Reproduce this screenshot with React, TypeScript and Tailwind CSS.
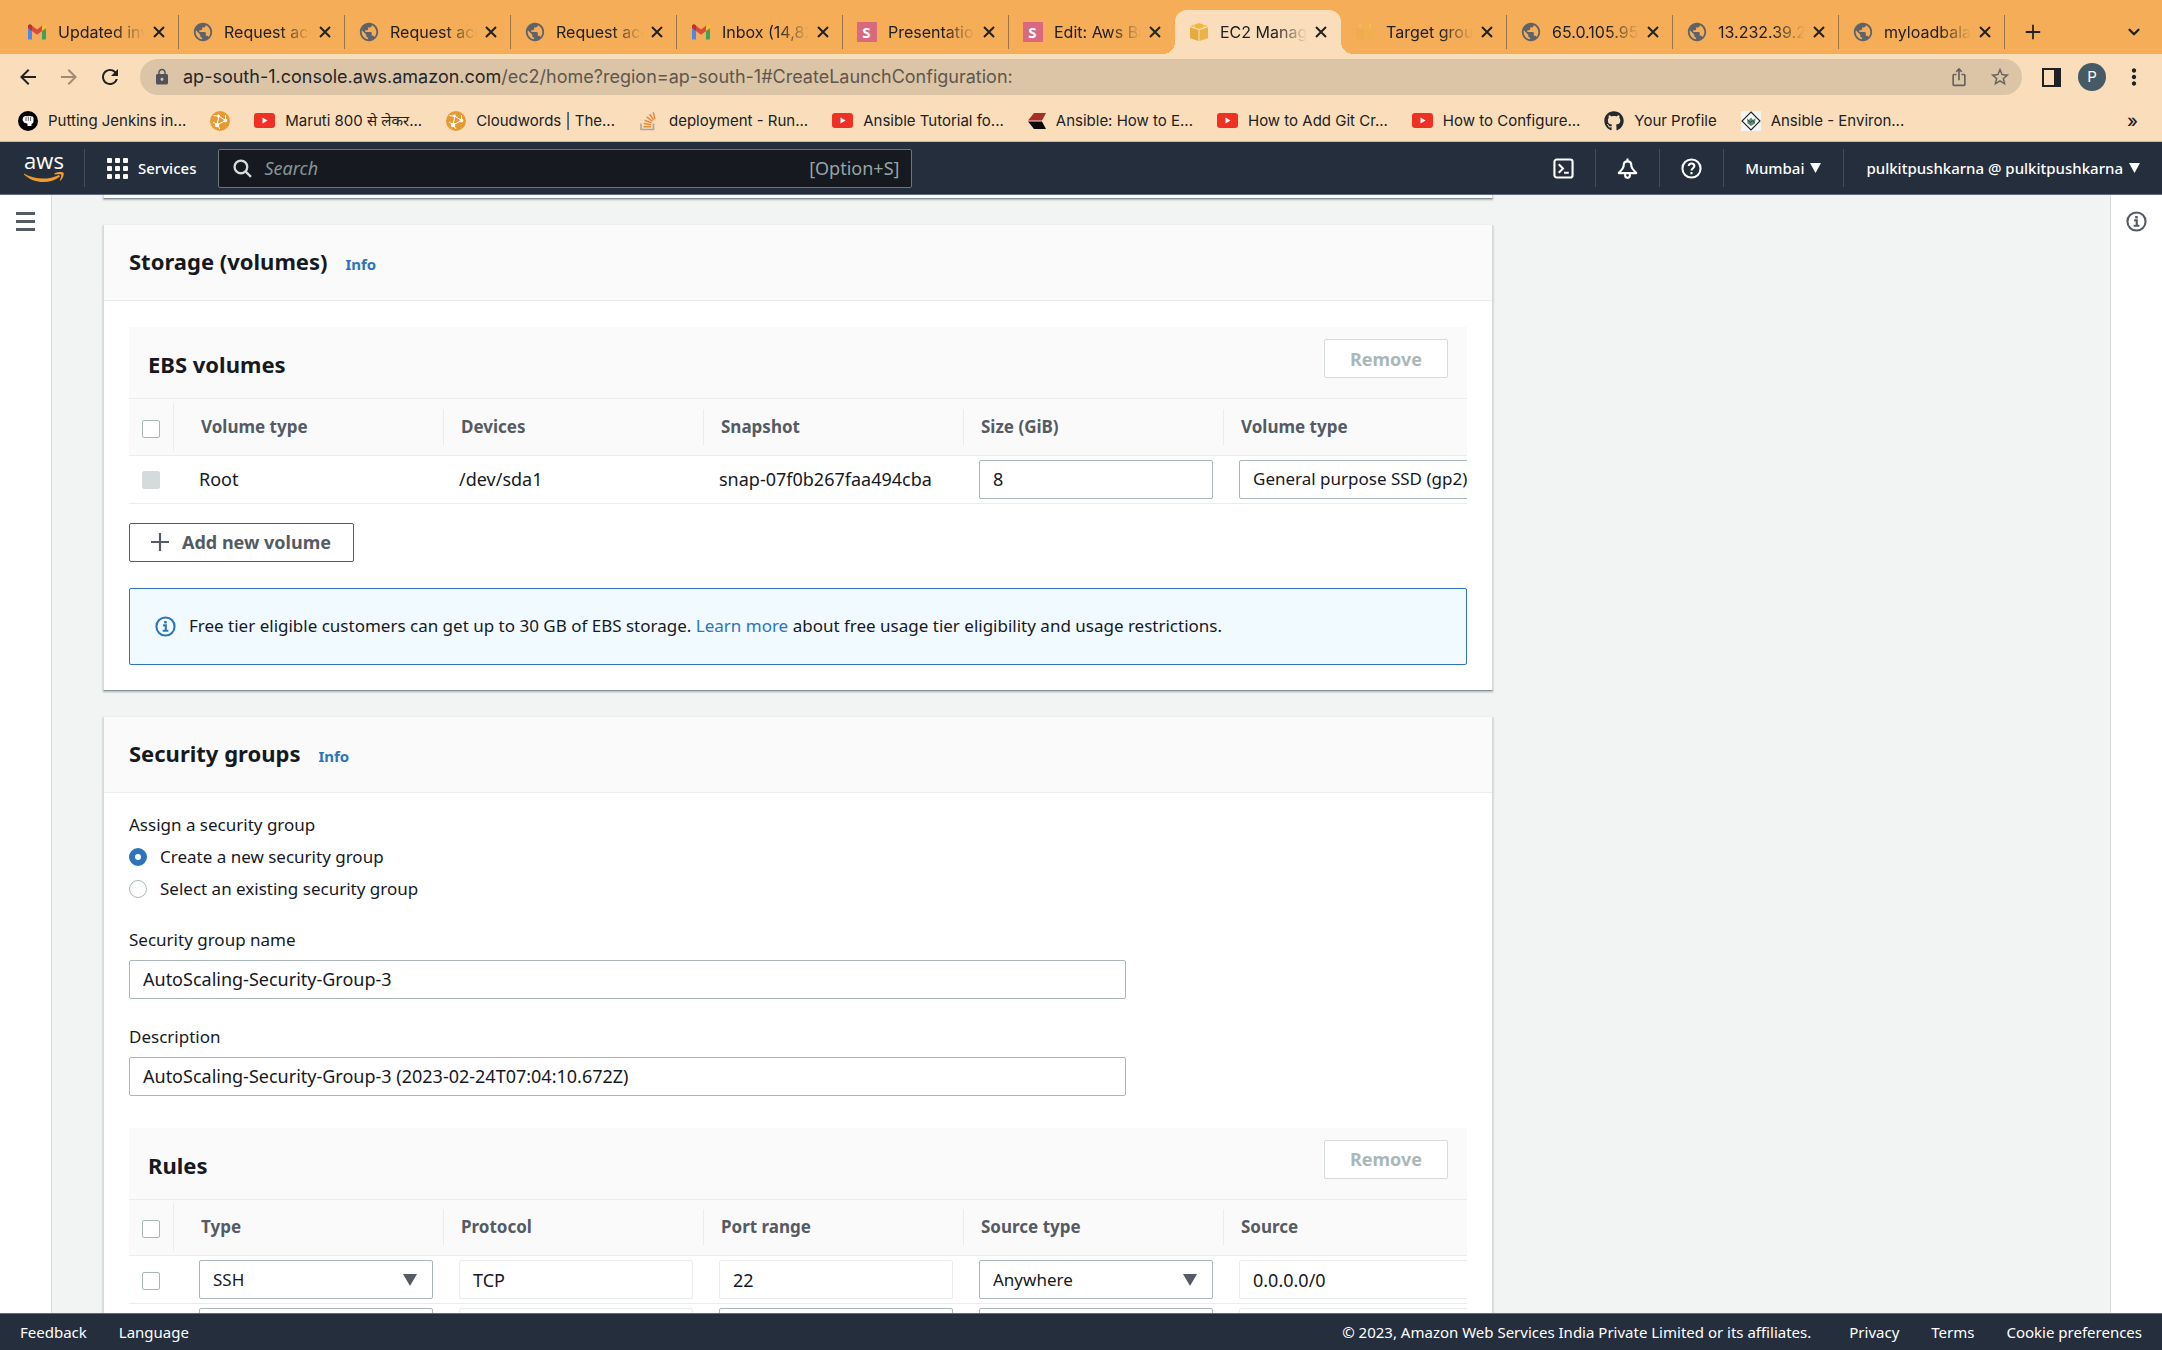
import React from "react";
import type { ReactNode } from "react";
import {
  MdArrowBack,
  MdArrowForward,
  MdRefresh,
  MdLock,
  MdStarBorder,
  MdMoreVert,
  MdPublic,
  MdIosShare,
} from "react-icons/md";
import { FaGithub } from "react-icons/fa";
import { FiChevronDown } from "react-icons/fi";

/* ---------- site icons ---------- */

const Gmail = () => (
  <svg viewBox="0 0 20 16" className="h-4 w-5 shrink-0" aria-hidden="true">
    <path d="M1 2.2v12.3c0 .6.4 1 1 1h3V7L1 4z" fill="#4b87f0" />
    <path d="M19 2.2v12.3c0 .6-.4 1-1 1h-3V7l4-3z" fill="#35a55a" />
    <path d="M1 2.4C1 .7 2.9.1 4.2 1L10 5.4 15.8 1v5.4L10 10.8 1 4z" fill="#dc4a3e" />
    <path d="M1 2.4C1 .7 2.9.1 4.2 1l.8.6V7L1 4z" fill="#b8352c" />
    <path d="M19 2.4C19 .7 17.1.1 15.8 1l-.8.6V7l4-3z" fill="#f0bf35" />
  </svg>
);

const Globe = () => <MdPublic className="size-[22px] shrink-0 text-[#5f6368]" aria-hidden="true" />;

const SBadge = () => (
  <span className="flex size-5 shrink-0 items-center justify-center bg-[#d9697f] font-['Noto_Sans',sans-serif] text-[15px] font-bold text-white">
    S
  </span>
);

const Cube = ({ faded = false }: { faded?: boolean }) => (
  <svg viewBox="0 0 20 20" className={faded ? "size-5 shrink-0 opacity-40" : "size-5 shrink-0"} aria-hidden="true">
    <path d="M1 4 10 1l9 3-9 3z" fill="#f3b73c" />
    <path d="M1 5.2 9.5 8v11L1 16.2z" fill="#e3ab40" />
    <path d="M19 5.2 10.5 8v11l8.500-2.800z" fill="#e9b347" />
    <path d="M5 1.8v4.6M15 1.8v4.6" stroke="#fadebb" strokeWidth=".8" />
  </svg>
);

const YouTube = () => (
  <svg viewBox="0 0 21 15" className="h-[15px] w-[21px] shrink-0" aria-hidden="true">
    <rect width="21" height="15" rx="3" fill="#ee3124" />
    <path d="M8.500 4.500v6l5-3z" fill="#fff" />
  </svg>
);

const Fist = () => (
  <svg viewBox="0 0 20 20" className="size-5 shrink-0" aria-hidden="true">
    <circle cx="10" cy="10" r="10" fill="#000" />
    <path
      d="M5 6.5 7 5l2 .3 2-.6 1.8.5 2 .3.8 1.500-.2 4.500-1.900 1.500V15H9.500v-2.200L6 11.500 4.600 9z"
      fill="#fff"
    />
    <path d="M8 6v4M10.300 5.500v4.500M12.600 6v4" stroke="#000" strokeWidth=".6" />
  </svg>
);

const Cloudwords = () => (
  <svg viewBox="0 0 20 20" className="size-5 shrink-0" aria-hidden="true">
    <circle cx="10" cy="10" r="10" fill="#e59a36" />
    <path
      d="M3.500 4.500 9 5.500M9 5l-2 9M8 4.500l7.500 5L7 14M15.500 9.500V4M7 14l3 4M7 14l-4-3"
      stroke="#fff"
      strokeWidth="1"
      fill="none"
    />
    <circle cx="8.500" cy="5" r="1.400" fill="#fff" />
    <circle cx="7" cy="14" r="2.200" fill="#fff" />
    <circle cx="15.500" cy="9.600" r="1.800" fill="#fff" />
  </svg>
);

const StackOverflow = () => (
  <svg viewBox="0 0 20 20" className="size-5 shrink-0" aria-hidden="true">
    <path d="M2 12.500v6h12.500v-6" fill="none" stroke="#a7a6a3" strokeWidth="1.600" />
    <path
      d="M4.500 15.700h7.500M4.700 12.600l7.400 1.200M5.600 9.300l7 2.600M7.600 5.900l6 4.400M10.600 3.200l4.300 5.900M14.200 1.200l1.800 6.900"
      stroke="#ea8a3e"
      strokeWidth="1.500"
    />
  </svg>
);

const Chevrons = () => (
  <svg viewBox="0 0 18 16" className="h-4 w-[18px] shrink-0" aria-hidden="true">
    <path d="M6 0h12l-4 7.500H0z" fill="#a52f2d" />
    <path d="M0 8.500h14l4 7.500H6z" fill="#0a0a0a" />
  </svg>
);

const Diamond = () => (
  <svg viewBox="0 0 20 20" className="size-5 shrink-0" aria-hidden="true">
    <rect width="20" height="20" fill="#f4f4f4" />
    <path d="M10 1l9 9-9 9-9-9z" fill="#fdfdfd" stroke="#222" strokeWidth="1.100" />
    <path d="M6 7.500 8 9l2-2.500L12 9l2.500-2-.5 5.500-4 2.500-3.500-2.500z" fill="#5d8d76" />
    <path d="M7 9l2 2.500L12 9.500l1.500 2.500" stroke="#2c4438" strokeWidth=".9" fill="none" />
  </svg>
);

const Cross = () => (
  <svg viewBox="0 0 12 12" className="size-3" stroke="currentColor" strokeWidth="2" aria-hidden="true">
    <path d="m1 1 10 10M11 1 1 11" />
  </svg>
);

const Plus = ({ className }: { className: string }) => (
  <svg viewBox="0 0 20 20" className={className} stroke="currentColor" strokeWidth="2.200" aria-hidden="true">
    <path d="M10 1v18M1 10h18" />
  </svg>
);

const Caret = ({ className }: { className: string }) => (
  <svg viewBox="0 0 10 9" className={className} preserveAspectRatio="none" aria-hidden="true">
    <path d="M0 0h10L5 9z" fill="currentColor" />
  </svg>
);

const InfoIcon = ({ className }: { className: string }) => (
  <svg viewBox="0 0 22 22" className={className} fill="none" stroke="currentColor" aria-hidden="true">
    <circle cx="11" cy="11" r="9.500" strokeWidth="2.200" />
    <path d="M8.500 9.800H11.300v5.400M8 15.400h6" strokeWidth="2.200" />
    <path d="M9.600 6.500h2.700" strokeWidth="2.600" />
  </svg>
);

const AwsLogo = () => (
  <span className="flex w-10 flex-col items-center text-white">
    <span className="font-['Open_Sans','Noto_Sans',sans-serif] text-[22px] leading-[16px] font-medium">aws</span>
    <svg viewBox="0 0 40 12" className="mt-1 h-3 w-10" aria-hidden="true">
      <path d="M0 1.500C10 7.500 24 8.500 35 3l1 1.500C26 12.500 10 12 0 2.500z" fill="#f39a2d" />
      <path
        d="M30.500 1.500c3-1.700 8-1.900 9-.7.800 1.300-.4 5.600-3 7.800-.6.400-.9.200-.6-.5.700-1.800 1.700-4.600 1.200-5.300-.6-.8-4-.6-6-.3-.9.100-1.200-.5-.6-1z"
        fill="#f39a2d"
      />
    </svg>
  </span>
);

/* ---------- browser ---------- */

type Tab = { icon: ReactNode; title: string; state?: "active" | "beforeActive" };

const tabs: Tab[] = [
  { icon: <Gmail />, title: "Updated invitation" },
  { icon: <Globe />, title: "Request access" },
  { icon: <Globe />, title: "Request access" },
  { icon: <Globe />, title: "Request access" },
  { icon: <Gmail />, title: "Inbox (14,826)" },
  { icon: <SBadge />, title: "Presentations" },
  { icon: <SBadge />, title: "Edit: Aws Basics", state: "beforeActive" },
  { icon: <Cube />, title: "EC2 Management", state: "active" },
  { icon: <Cube faded />, title: "Target groups" },
  { icon: <Globe />, title: "65.0.105.95" },
  { icon: <Globe />, title: "13.232.39.24" },
  { icon: <Globe />, title: "myloadbalancer" },
];

function TabStrip() {
  return (
    <div className="flex h-[54px] items-end bg-[#f5ae57] pr-4 pl-[13px]">
      {tabs.map((tab, i) => {
        const active = tab.state === "active";
        return (
          <div
            key={i}
            className={
              active
                ? "relative flex h-11 w-[166px] items-center rounded-t-xl bg-[#fadebb]"
                : "flex h-11 w-[166px] items-center"
            }
          >
            {active && (
              <>
                <span className="absolute bottom-0 -left-3 size-3 bg-[radial-gradient(circle_at_0_0,transparent_12px,#fadebb_12px)]" />
                <span className="absolute -right-3 bottom-0 size-3 bg-[radial-gradient(circle_at_100%_0,transparent_12px,#fadebb_12px)]" />
              </>
            )}
            <span className="flex w-[45px] shrink-0 items-center justify-center pl-0.5">{tab.icon}</span>
            <span className="w-[87px] overflow-hidden text-[16px] whitespace-nowrap [mask-image:linear-gradient(to_right,black_64%,transparent)]">
              {tab.title}
            </span>
            <button aria-label={"Close " + tab.title} className="ml-1 flex size-5 items-center justify-center">
              <Cross />
            </button>
            {!tab.state && <span className="ml-auto h-[34px] w-px bg-[#9a7443]" />}
          </div>
        );
      })}
      <button aria-label="New tab" className="ml-3 flex h-11 w-8 items-center justify-center">
        <Plus className="size-4" />
      </button>
      <button aria-label="Search tabs" className="ml-auto flex h-11 w-6 items-center justify-center">
        <FiChevronDown className="size-[18px]" strokeWidth={3} />
      </button>
    </div>
  );
}

function Toolbar() {
  return (
    <div className="flex h-[46px] items-center pr-3.5 pl-4">
      <button aria-label="Back" className="flex w-6 justify-center">
        <MdArrowBack className="size-6" />
      </button>
      <button aria-label="Forward" className="ml-[17px] flex w-6 justify-center text-[#a08c74]">
        <MdArrowForward className="size-6" />
      </button>
      <button aria-label="Reload" className="ml-[17px] flex w-6 justify-center">
        <MdRefresh className="size-[26px]" />
      </button>
      <div className="ml-[18px] flex h-9 min-w-0 flex-1 items-center rounded-full bg-[#dcc4a6] pr-[11px] pl-[13px]">
        <MdLock className="mr-3 size-[18px] shrink-0 text-[#50545a]" />
        <p className="flex-1 text-[18px] whitespace-nowrap text-[#5e574d]">
          <span className="text-[#25262a]">ap-south-1.console.aws.amazon.com</span>
          /ec2/home?region=ap-south-1#CreateLaunchConfiguration:
        </p>
        <button aria-label="Share" className="mr-5 text-[#66625c]">
          <MdIosShare className="size-5" />
        </button>
        <button aria-label="Bookmark this page" className="text-[#66625c]">
          <MdStarBorder className="size-[22px]" />
        </button>
      </div>
      <button aria-label="Side panel" className="ml-5 flex size-[19px] border-2 border-[#202124]">
        <span className="ml-auto h-full border-l-[5px] border-[#202124]" />
      </button>
      <button
        aria-label="Profile"
        className="ml-[17px] flex size-7 items-center justify-center rounded-full bg-[#455a64] text-[15px] text-white"
      >
        P
      </button>
      <button aria-label="Menu" className="ml-3.5 flex w-7 justify-center">
        <MdMoreVert className="size-[26px]" />
      </button>
    </div>
  );
}

const bookmarks: { icon: ReactNode; label: string }[] = [
  { icon: <Fist />, label: "Putting Jenkins in..." },
  { icon: <Cloudwords />, label: "" },
  { icon: <YouTube />, label: "Maruti 800 से लेकर..." },
  { icon: <Cloudwords />, label: "Cloudwords | The..." },
  { icon: <StackOverflow />, label: "deployment - Run..." },
  { icon: <YouTube />, label: "Ansible Tutorial fo..." },
  { icon: <Chevrons />, label: "Ansible: How to E..." },
  { icon: <YouTube />, label: "How to Add Git Cr..." },
  { icon: <YouTube />, label: "How to Configure..." },
  { icon: <FaGithub className="size-5 shrink-0 text-[#24292e]" />, label: "Your Profile" },
  { icon: <Diamond />, label: "Ansible - Environ..." },
];

function Bookmarks() {
  return (
    <nav
      aria-label="Bookmarks"
      className="flex h-[42px] items-center gap-6 border-b border-[#cdb697] pr-6 pl-[18px]"
    >
      {bookmarks.map((b, i) => (
        <a
          key={i}
          href="#"
          aria-label={b.label || "Cloudwords"}
          className="flex items-center gap-2.5 text-[15px] leading-6 whitespace-nowrap"
        >
          {b.icon}
          {b.label && <span>{b.label}</span>}
        </a>
      ))}
      <button aria-label="More bookmarks" className="ml-auto text-[18px] font-medium">
        »
      </button>
    </nav>
  );
}

/* ---------- console ---------- */

const NavDivider = ({ className }: { className: string }) => (
  <span className={"h-[38px] w-px bg-[#414d5c] " + className} />
);

function ConsoleNav() {
  return (
    <header className="flex h-[53px] shrink-0 items-center border-b border-[#5f6b7a] bg-[#252e3d] pr-[22px] pl-6 text-[15px] font-medium text-white">
      <a href="#" aria-label="AWS home">
        <AwsLogo />
      </a>
      <NavDivider className="ml-5" />
      <button className="ml-[22px] flex items-center gap-2.5">
        <span className="grid grid-cols-3 gap-[3px]">
          {Array.from({ length: 9 }, (_, i) => (
            <span key={i} className="size-[5px] rounded-[1px] bg-white" />
          ))}
        </span>
        <span>Services</span>
      </button>
      <label className="ml-[22px] flex h-[39px] w-[694px] items-center rounded-[2px] border border-[#687878] bg-[#16191f] pr-3 pl-[14px]">
        <svg
          viewBox="0 0 18 18"
          className="mr-3 size-[19px] shrink-0"
          fill="none"
          stroke="#d5dbdb"
          strokeWidth="2.200"
          aria-hidden="true"
        >
          <circle cx="7.500" cy="7.500" r="6" />
          <path d="m12 12 5 5" />
        </svg>
        <input
          type="text"
          aria-label="Search"
          placeholder="Search"
          className="min-w-0 flex-1 bg-transparent text-[18px] font-normal placeholder:text-[#879596] placeholder:italic focus:outline-none"
        />
        <span className="text-[18px] font-normal text-[#95a5a6]">[Option+S]</span>
      </label>
      <div className="ml-auto flex items-center">
        <button aria-label="CloudShell">
          <svg viewBox="0 0 22 22" className="size-[21px]" fill="none" stroke="#fff" strokeWidth="2.200" aria-hidden="true">
            <rect x="1.500" y="1.500" width="19" height="19" rx="2.500" />
            <path d="m6 6.500 4.500 4.500L6 15.500M11.500 15.500h5" />
          </svg>
        </button>
        <NavDivider className="mx-[21px]" />
        <button aria-label="Notifications">
          <svg
            viewBox="0 0 22 22"
            className="size-[21px]"
            fill="none"
            stroke="#fff"
            strokeWidth="2.200"
            strokeLinejoin="round"
            aria-hidden="true"
          >
            <path d="M11 .5v3M11 3.500c-2.600 0-4 1.700-4 4.200C7 11 4.500 13 1.800 15.800h18.400C17.500 13 15 11 15 7.700c0-2.500-1.400-4.200-4-4.200z" />
            <path d="M8.500 16v2.200c0 1.500 1 2.600 2.500 2.600s2.500-1.100 2.500-2.600V16" />
          </svg>
        </button>
        <NavDivider className="mx-[21px]" />
        <button aria-label="Help">
          <svg viewBox="0 0 22 22" className="size-[21px]" fill="none" stroke="#fff" strokeWidth="2.200" aria-hidden="true">
            <circle cx="11" cy="11" r="9.500" />
            <path d="M8 8.500C8 6.800 9.300 5.800 11 5.800s3 1.100 3 2.700c0 2.200-3 2.300-3 4.700M11 14.700v2.200" />
          </svg>
        </button>
        <NavDivider className="mx-[21px]" />
        <button className="flex items-center gap-1.5">
          Mumbai <Caret className="h-[10px] w-[11px]" />
        </button>
        <NavDivider className="mx-[22px]" />
        <button className="flex items-center gap-1.5">
          pulkitpushkarna @ pulkitpushkarna <Caret className="h-[10px] w-[11px]" />
        </button>
      </div>
    </header>
  );
}

const fieldBox = "h-[39px] w-full rounded-[2px] border bg-white px-[13px] text-[#16191f] focus:outline-none";
const checkBox =
  "block size-[18px] appearance-none rounded-[2px] border border-[#aab7b8] bg-white disabled:border-[#d5dbdb] disabled:bg-[#d5dbdb]";

const TextField = ({ label, value }: { label: string; value: string }) => (
  <input type="text" aria-label={label} defaultValue={value} className={fieldBox + " border-[#aab7b8] text-[18px]"} />
);

const ReadOnlyField = ({ label, value }: { label: string; value: string }) => (
  <input
    type="text"
    readOnly
    aria-label={label}
    defaultValue={value}
    className={fieldBox + " border-[#eaeded] text-[18px]"}
  />
);

const SelectField = ({ label, value }: { label: string; value: string }) => (
  <span className="relative block">
    <select aria-label={label} className={fieldBox + " appearance-none border-[#aab7b8] text-[17px]"}>
      <option>{value}</option>
    </select>
    <Caret className="pointer-events-none absolute top-[14px] right-4 h-3 w-[14px] text-[#545b64]" />
  </span>
);

function Card({ title, children }: { title: string; children: ReactNode }) {
  return (
    <section className="border-x border-b border-x-[#d5dbdb] border-b-[#879596] bg-white shadow-[0_1px_2px_0_rgba(0,28,36,0.3)]">
      <header className="flex h-[76px] items-baseline gap-[18px] border-b border-[#eaeded] bg-[#fafafa] px-[25px] pt-[21px]">
        <h2 className="text-[22px] leading-[30px] font-bold text-[#16191f]">{title}</h2>
        <a href="#" className="text-[15px] font-bold text-[#2e74bb]">
          Info
        </a>
      </header>
      <div className="px-[25px]">{children}</div>
    </section>
  );
}

type Row = { label: string; disabled?: boolean; cells: ReactNode[] };

function DataTable({ title, columns, rows }: { title: string; columns: string[]; rows: Row[] }) {
  return (
    <div className="overflow-hidden">
      <div className="flex h-[72px] items-start justify-between border-b border-[#eaeded] bg-[#fafafa] px-[19px] pt-3">
        <h3 className="pt-2.5 text-[22px] leading-[30px] font-bold text-[#16191f]">{title}</h3>
        <button
          disabled
          className="h-[39px] w-[124px] rounded-[2px] border border-[#d5dbdb] bg-white text-[18px] font-bold text-[#aab7b8]"
        >
          Remove
        </button>
      </div>
      <table className="w-[1415px] table-fixed border-collapse text-left">
        <colgroup>
          <col className="w-[55px]" />
          {columns.map((c, i) => (
            <col key={c + i} className={i === columns.length - 1 ? "w-[320px]" : "w-[260px]"} />
          ))}
        </colgroup>
        <thead>
          <tr className="h-14 border-b border-[#eaeded] bg-[#fafafa]">
            <th className="p-0">
              <span className="mr-2.5 flex h-12 items-center border-r border-[#eaeded] pt-1 pl-[13px]">
                <input type="checkbox" aria-label="Select all" className={checkBox} />
              </span>
            </th>
            {columns.map((c, i) => (
              <th key={c + i} scope="col" className="p-0 font-bold text-[#545b64]">
                <span
                  className={
                    i === columns.length - 1
                      ? "flex h-9 items-center pl-[17px]"
                      : "flex h-9 items-center border-r border-[#eaeded] pl-[17px]"
                  }
                >
                  {c}
                </span>
              </th>
            ))}
          </tr>
        </thead>
        <tbody>
          {rows.map((r, i) => (
            <tr key={i} className="h-12 border-b border-[#eaeded] text-[18px] text-[#16191f]">
              <td className="p-0 pt-0.5 pl-[13px]">
                <input type="checkbox" aria-label={r.label} disabled={r.disabled} className={checkBox} />
              </td>
              {r.cells.map((cell, j) => (
                <td key={j} className="p-0 pr-[11px] pl-[15px]">
                  {cell}
                </td>
              ))}
            </tr>
          ))}
        </tbody>
      </table>
    </div>
  );
}

const ebsRows: Row[] = [
  {
    label: "Select Root",
    disabled: true,
    cells: [
      "Root",
      "/dev/sda1",
      "snap-07f0b267faa494cba",
      <TextField label="Size (GiB)" value="8" />,
      <SelectField label="Volume type" value="General purpose SSD (gp2)" />,
    ],
  },
];

const ruleRow = (
  name: string,
  type: string,
  protocol: string,
  port: ReactNode,
  sourceType: string,
  source: string,
): Row => ({
  label: "Select rule " + name,
  cells: [
    <SelectField label="Type" value={type} />,
    <ReadOnlyField label="Protocol" value={protocol} />,
    port,
    <SelectField label="Source type" value={sourceType} />,
    <ReadOnlyField label="Source" value={source} />,
  ],
});

const rules: Row[] = [
  ruleRow("1", "SSH", "TCP", <ReadOnlyField label="Port range" value="22" />, "Anywhere", "0.0.0.0/0"),
  ruleRow("2", "Custom TCP", "TCP", <TextField label="Port range" value="" />, "Anywhere", "0.0.0.0/0"),
];

const radio =
  "size-[18px] appearance-none rounded-full border border-[#aab7b8] bg-white checked:border-[6px] checked:border-[#2e74bb]";

function Labeled({ id, label, value, className }: { id: string; label: string; value: string; className: string }) {
  return (
    <div className={"max-w-[997px] " + className}>
      <label htmlFor={id} className="block leading-[30px]">
        {label}
      </label>
      <input
        id={id}
        type="text"
        defaultValue={value}
        className={fieldBox + " mt-[5px] border-[#aab7b8] text-[18px]"}
      />
    </div>
  );
}

export default function App() {
  return (
    <div className="flex h-screen flex-col overflow-hidden bg-[#f2f3f3] font-['Noto_Sans',sans-serif] text-[17px] leading-6 text-[#16191f]">
      <div className="shrink-0 bg-[#fadebb] font-['Inter','Noto_Sans',sans-serif] text-[#202124]">
        <TabStrip />
        <Toolbar />
        <Bookmarks />
      </div>

      <ConsoleNav />

      <div className="flex min-h-0 flex-1">
        <aside className="w-[52px] shrink-0 border-r border-[#d5dbdb] bg-white">
          <button aria-label="Open navigation" className="mt-[17px] ml-4 flex w-[19px] flex-col gap-[5px]">
            <span className="h-[3px] w-full bg-[#545b64]" />
            <span className="h-[3px] w-full bg-[#545b64]" />
            <span className="h-[3px] w-full bg-[#545b64]" />
          </button>
        </aside>

        <main className="min-w-0 flex-1 overflow-hidden pl-[51px]">
          <div className="flex max-w-[1390px] flex-col gap-[26px]">
            <div className="h-1 border-x border-b border-x-[#d5dbdb] border-b-[#879596] bg-white shadow-[0_1px_2px_0_rgba(0,28,36,0.3)]" />

            <Card title="Storage (volumes)">
              <div className="pt-[26px] pb-[25px]">
                <DataTable
                  title="EBS volumes"
                  columns={["Volume type", "Devices", "Snapshot", "Size (GiB)", "Volume type"]}
                  rows={ebsRows}
                />
                <button className="mt-[19px] flex h-[39px] items-center gap-3 rounded-[2px] border border-[#545b64] bg-white pr-[22px] pl-5 text-[18px] font-bold text-[#545b64]">
                  <Plus className="size-5" />
                  <span>Add new volume</span>
                </button>
                <div className="mt-[26px] flex h-[77px] items-center gap-[13px] rounded-[2px] border border-[#2e74bb] bg-[#f1faff] pl-[25px]">
                  <InfoIcon className="size-[21px] shrink-0 text-[#2e74bb]" />
                  <p>
                    Free tier eligible customers can get up to 30 GB of EBS storage.{" "}
                    <a href="#" className="text-[#2e74bb]">
                      Learn more
                    </a>{" "}
                    about free usage tier eligibility and usage restrictions.
                  </p>
                </div>
              </div>
            </Card>

            <Card title="Security groups">
              <div className="pt-[17px] pb-[25px]">
                <fieldset>
                  <legend className="leading-[30px]">Assign a security group</legend>
                  <label className="mt-px flex h-8 items-center gap-[13px]">
                    <input type="radio" name="group" defaultChecked className={radio} />
                    Create a new security group
                  </label>
                  <label className="flex h-8 items-center gap-[13px]">
                    <input type="radio" name="group" className={radio} />
                    Select an existing security group
                  </label>
                </fieldset>
                <Labeled id="sg-name" label="Security group name" value="AutoScaling-Security-Group-3" className="mt-5" />
                <Labeled
                  id="sg-description"
                  label="Description"
                  value="AutoScaling-Security-Group-3 (2023-02-24T07:04:10.672Z)"
                  className="mt-[23px] mb-8"
                />
                <DataTable
                  title="Rules"
                  columns={["Type", "Protocol", "Port range", "Source type", "Source"]}
                  rows={rules}
                />
              </div>
            </Card>
          </div>
        </main>

        <aside className="w-[52px] shrink-0 border-l border-[#d5dbdb] bg-white">
          <button aria-label="Info" className="mt-4 ml-[15px] block text-[#545b64]">
            <InfoIcon className="size-[21px]" />
          </button>
        </aside>
      </div>

      <footer className="flex h-[37px] shrink-0 items-center border-t border-[#5f6b7a] bg-[#252e3d] px-5 text-[15px] text-white">
        <button>Feedback</button>
        <button className="ml-8">Language</button>
        <p className="ml-auto">© 2023, Amazon Web Services India Private Limited or its affiliates.</p>
        <a href="#" className="ml-[38px]">
          Privacy
        </a>
        <a href="#" className="ml-8">
          Terms
        </a>
        <a href="#" className="ml-8">
          Cookie preferences
        </a>
      </footer>
    </div>
  );
}
